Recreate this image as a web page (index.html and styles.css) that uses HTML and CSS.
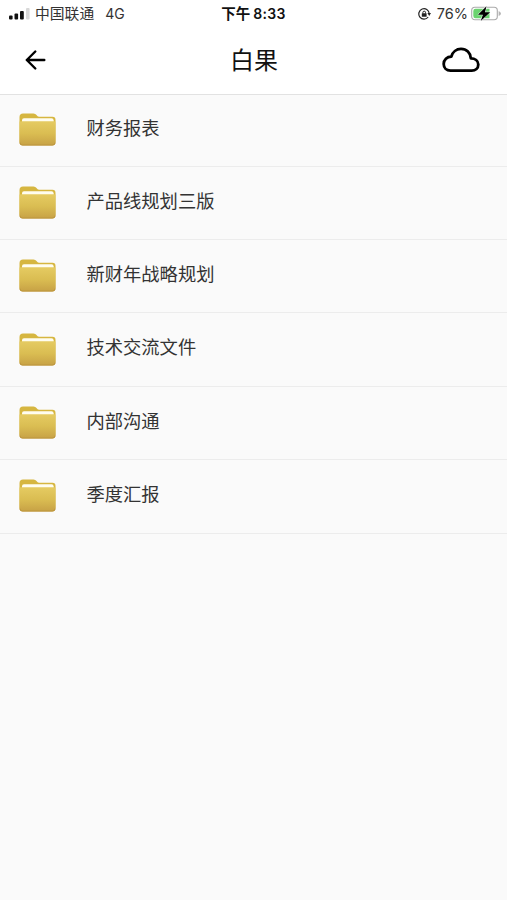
FILE: index.html
```html
<!DOCTYPE html>
<html lang="zh-CN">
<head>
<meta charset="utf-8">
<meta name="viewport" content="width=device-width, initial-scale=1">
<title>白果</title>
<link rel="stylesheet" href="styles.css">
</head>
<body>
<svg class="defs" width="0" height="0" aria-hidden="true">
  <defs>
    <linearGradient id="front" x1="0" y1="0" x2="0" y2="1">
      <stop offset="0" stop-color="#e5cb62"/>
      <stop offset=".5" stop-color="#dabd52"/>
      <stop offset="1" stop-color="#c7a145"/>
    </linearGradient>
    <symbol id="folder" viewBox="0 0 37 33">
      <path d="M.5 4Q.5.5 4 .5H14.500Q16.500 .5 17.500 2T20 3.700H33.500Q36.500 3.700 36.500 7V29H.5Z" fill="#d6b640"/>
      <path d="M3 10V7.200Q3 5.200 5 5.200H32.500Q34.600 5.200 34.600 7.200V10Z" fill="#fffdf0"/>
      <path d="M.5 8.500Q1.500 8.300 3.500 8.300H33.500Q35.500 8.300 36.500 8.500V29.500Q36.500 32.500 33.500 32.500H3.500Q.5 32.500 .5 29.500Z" fill="url(#front)"/>
      <path d="M.9 29.500Q1 32 3.500 32H33.500Q36 32 36.100 29.500" fill="none" stroke="#bd963e" stroke-width="1"/>
    </symbol>
  </defs>
</svg>
<header class="top">
  <div class="status">
    <div class="status-left">
      <svg class="signal" width="21" height="12" viewBox="0 0 21 12">
        <rect x="0" y="7.500" width="3.600" height="4" rx="1"/>
        <rect x="5.500" y="5.500" width="3.600" height="6" rx="1"/>
        <rect x="11" y="3" width="3.800" height="8.500" rx="1"/>
        <rect x="17" y="0" width="3.600" height="11.500" rx="1" fill="#d8d8d8"/>
      </svg>
      <span class="carrier">中国联通</span>
      <span class="network">4G</span>
    </div>
    <div class="clock"><span>下午</span><span class="time">8:33</span></div>
    <div class="status-right">
      <svg width="14" height="12" viewBox="0 0 14 12" fill="none" stroke="#222" stroke-width="1.200">
        <path d="M10.200 9A5.200 5.200 0 1 1 11.200 5.500"/>
        <path d="M9.400 5H13L11.200 7.900Z" fill="#222" stroke="none"/>
        <rect x="3.800" y="5.300" width="4.800" height="3.500" rx=".5" fill="#222" stroke="none"/>
        <path d="M4.900 5.500V4.300Q4.900 3.200 6.200 3.200T7.500 4.300V5.500" stroke-width="1"/>
      </svg>
      <span class="percent">76%</span>
      <svg class="battery" width="30" height="16" viewBox="0 0 30 16">
        <rect x=".7" y="1.200" width="25.600" height="12.600" rx="3.200" fill="#fff" stroke="#aaa" stroke-width="1.100"/>
        <path d="M4.500 2.800H18.500V12.200H4.500Q2.300 12.200 2.300 10V5Q2.300 2.800 4.500 2.800Z" fill="#6bd36f"/>
        <path d="M27.600 5Q30 6 30 7.500T27.600 10Z" fill="#b5b5b5"/>
        <path d="M15.500 .3L6.900 8.700H11.900L9.700 14.900L19.200 6.200H14Z" fill="#000" stroke="#fff" stroke-width="1" paint-order="stroke"/>
      </svg>
    </div>
  </div>
  <div class="nav">
    <svg class="back" width="22" height="22" viewBox="0 0 22 22" fill="none" stroke="#000" stroke-width="2.400" stroke-linecap="round" stroke-linejoin="round">
      <path d="M11.300 2.500L2.800 11L11.300 19.500M2.800 11H20.300"/>
    </svg>
    <h1>白果</h1>
    <svg class="cloud" width="38" height="26" viewBox="0 0 38 26" fill="none" stroke="#000" stroke-width="2.800" stroke-linejoin="round">
      <path d="M8.500 23.600C4.500 23.600 1.700 20.800 1.700 17C1.700 12.800 5 9.700 9.300 9.700C10.500 5 14.500 1.900 19 1.900C24.500 1.900 28.600 6 28.800 11.300C33 11.300 36.300 13.700 36.300 17.500C36.300 21.100 33.500 23.600 29.700 23.600Z"/>
    </svg>
  </div>
</header>
<main class="list">
  <div class="row"><svg class="folder"><use href="#folder"/></svg><span>财务报表</span></div>
  <div class="row"><svg class="folder"><use href="#folder"/></svg><span>产品线规划三版</span></div>
  <div class="row"><svg class="folder"><use href="#folder"/></svg><span>新财年战略规划</span></div>
  <div class="row"><svg class="folder"><use href="#folder"/></svg><span>技术交流文件</span></div>
  <div class="row"><svg class="folder"><use href="#folder"/></svg><span>内部沟通</span></div>
  <div class="row"><svg class="folder"><use href="#folder"/></svg><span>季度汇报</span></div>
</main>
</body>
</html>
```
FILE: styles.css
```css
* { box-sizing: border-box; }
body {
  margin: 0;
  min-height: 900px;
  background: #fafafa;
  color: #333;
  font-family: Inter, "Noto Sans CJK SC", sans-serif;
}
svg { display: block; flex: none; }
.defs { position: absolute; }
.top {
  height: 94.500px;
  background: #fff;
  border-bottom: 1px solid #e2e2e2;
}
.status {
  display: grid;
  grid-template-columns: 1fr auto 1fr;
  align-items: center;
  height: 28px;
  padding: 0 6px 0 9px;
  font-size: 15px;
  line-height: 28px;
}
.status-left, .status-right, .clock { display: flex; align-items: center; }
.signal { fill: #111; }
.carrier { margin-left: 5px; font-size: 14.800px; }
.network { margin-left: 11px; font-size: 14px; }
.clock { gap: 3px; margin-right: 3px; color: #111; font-weight: 600; font-size: 14.500px; }
.time { font-size: 14px; letter-spacing: .3px; }
.status-right { justify-content: flex-end; }
.percent { margin: 0 3px 0 5px; font-size: 14.500px; }
.nav {
  display: grid;
  grid-template-columns: 1fr auto 1fr;
  align-items: center;
  height: 64px;
  padding: 0 27px 0 24px;
}
.nav h1 {
  margin: 0;
  padding: 2px 0 0 4px;
  color: #111;
  font-size: 24px;
  font-weight: 400;
  line-height: 36px;
}
.cloud { justify-self: end; }
.row {
  display: flex;
  height: 73.350px;
  padding: 20px 19px 0;
  border-bottom: 1px solid #ececec;
}
.row:first-child { height: 72.300px; padding-top: 19px; }
.folder { width: 37px; height: 33px; margin-top: -.7px; }
.row span {
  margin-left: 30.500px;
  font-size: 18.300px;
  line-height: 28px;
}
```
